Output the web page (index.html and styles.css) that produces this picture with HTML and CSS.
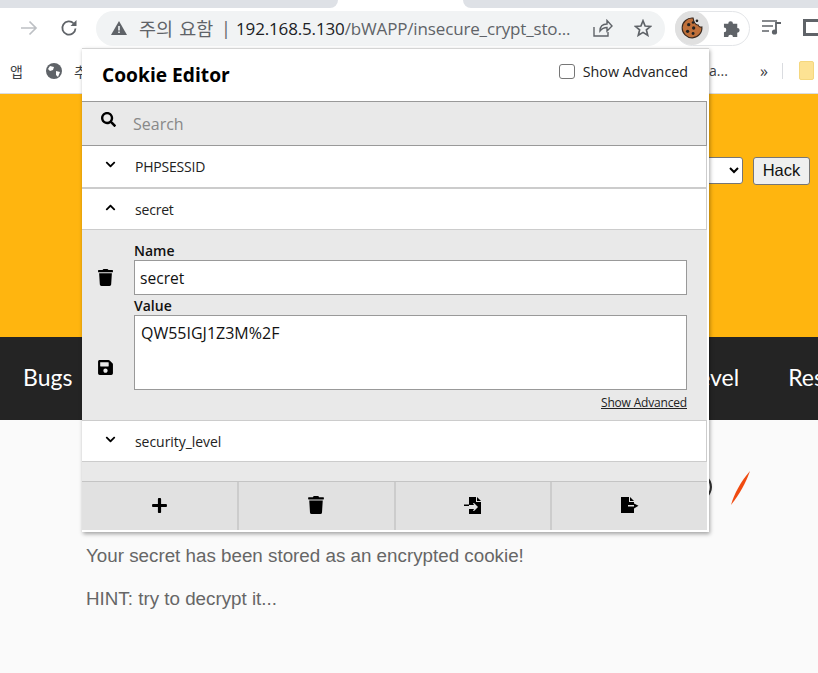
FILE: index.html
```html
<!DOCTYPE html>
<html lang="ko">
<head>
<meta charset="utf-8">
<title>Cookie Editor</title>
<link rel="stylesheet" href="styles.css">
</head>
<body>
<div class="tabstrip"><div class="tab-left"></div><div class="tab-active"></div><div class="tab-right"></div></div>
<div class="toolbar">
  <svg class="tb-arrow" viewBox="0 0 18 16"><path d="M1 8h15M9.500 1.500 16 8l-6.500 6.500" fill="none" stroke="#bdc0c4" stroke-width="1.700"/></svg>
  <svg class="tb-reload" viewBox="0 0 18 18"><path d="M15.500 9.500a6.600 6.600 0 1 1-1.800-5" fill="none" stroke="#5f6368" stroke-width="1.800"/><path d="M16.500 1v6h-6z" fill="#5f6368"/></svg>
  <div class="omnibox">
    <svg class="warn" viewBox="0 0 16 14"><path d="M8 0 16 14H0z" fill="#5f6368"/><path d="M7.200 5h1.600v4.500H7.200zM7.200 10.500h1.600V12H7.200z" fill="#f1f3f4"/></svg>
    <span class="warn-text">주의 요함</span>
    <span class="pipe">|</span>
    <span class="url"><span class="url-host">192.168.5.130</span>/bWAPP/insecure_crypt_sto...</span>
    <svg class="share" viewBox="0 0 20 18"><path d="M1 8v9h14v-4M7 12c0-5 3-7 7-7V1.500L19 7l-5 5V8.500c-3 0-5 1-7 3.500z" fill="none" stroke="#5f6368" stroke-width="1.400"/></svg>
    <svg class="star" viewBox="0 0 18 18"><path d="M9 1.800 11.100 7l5.500.4-4.200 3.500 1.300 5.400L9 13.400l-4.700 2.900 1.300-5.400L1.400 7.400 6.900 7z" fill="none" stroke="#5f6368" stroke-width="1.700"/></svg>
  </div>
  <div class="ext-pill">
    <div class="cookie-wrap">
      <svg class="cookie" viewBox="0 0 20 20"><path d="M11 1a9 9 0 1 0 8 8c-1.500.5-3-.2-3.500-1.800C13.500 7.500 11.500 5 11 1z" fill="#c0703a" stroke="#3a2a20" stroke-width="1"/><circle cx="7" cy="7" r="1.500" fill="#222"/><circle cx="11.500" cy="10" r="1.500" fill="#222"/><circle cx="6" cy="13" r="1.500" fill="#222"/><circle cx="11" cy="15" r="1.300" fill="#222"/><circle cx="14.500" cy="3.500" r="1.200" fill="#222"/><circle cx="11" cy="5" r="1.200" fill="#222"/></svg>
    </div>
    <svg class="puzzle" viewBox="0 0 20 20"><path d="M1 6h4.500a2.500 2.500 0 1 1 5 0H15v4.500a2.500 2.500 0 1 1 0 5V20h-4.500a2.500 2.500 0 1 0-5 0H1v-5a2.500 2.500 0 1 0 0-5z" fill="#5f6368"/></svg>
  </div>
  <svg class="playlist" viewBox="0 0 20 16"><path d="M0 2h15M0 7h11M0 12h7" stroke="#5f6368" stroke-width="1.700" fill="none"/><path d="M14 13V4h5" stroke="#5f6368" stroke-width="1.800" fill="none"/><circle cx="12.500" cy="13" r="2.600" fill="#5f6368"/></svg>
  <div class="sidepanel"></div>
</div>
<div class="bookmarks">
  <span class="bm-apps">앱</span>
  <svg class="globe" viewBox="0 0 16 16"><circle cx="8" cy="8" r="8" fill="#5f6368"/><path d="M4 3l4 1-1 3-3 1-2-2zM10 8l4 1-2 5-2-2z" fill="#fff"/></svg>
  <span class="bm-clip">추</span>
  <span class="bm-more">a...</span>
  <span class="bm-chev">»</span>
  <span class="bm-sep"></span>
  <span class="bm-folder"></span>
</div>
<header class="hero">
  <select class="hero-select"><option></option></select>
  <button class="hero-btn">Hack</button>
</header>
<nav class="nav">
  <span class="nav-item nav-first">Bugs</span>
  <span class="nav-item">Change Password</span>
  <span class="nav-item">Create User</span>
  <span class="nav-item">Set Security Level</span>
  <span class="nav-item">Reset</span>
</nav>
<main class="content">
  <p class="msg">Your secret has been stored as an encrypted cookie!</p>
  <p class="msg">HINT: try to decrypt it...</p>
</main>
<svg class="deco" viewBox="0 0 50 40"><path d="M2 5Q14 17 2 29" fill="none" stroke="#333" stroke-width="2"/><path d="M47 1C43 12 37 24 28 35c3-11 10-24 19-34z" fill="#f04a10"/></svg>

<section class="popup">
  <div class="pop-head">
    <h1 class="pop-title">Cookie Editor</h1>
    <label class="adv-check"><span class="checkbox"></span>Show Advanced</label>
  </div>
  <div class="search">
    <svg class="ico ico-search" viewBox="0 0 512 512"><path d="M505 442.700L405.300 343c-4.500-4.500-10.600-7-17-7H372c27.600-35.300 44-79.700 44-128C416 93.100 322.900 0 208 0S0 93.100 0 208s93.100 208 208 208c48.300 0 92.700-16.400 128-44v16.300c0 6.400 2.500 12.500 7 17l99.700 99.700c9.400 9.400 24.600 9.400 33.900 0l28.300-28.300c9.400-9.400 9.400-24.600.1-34zM208 336c-70.700 0-128-57.200-128-128 0-70.700 57.200-128 128-128 70.700 0 128 57.200 128 128 0 70.700-57.200 128-128 128z"/></svg>
    <input class="search-input" placeholder="Search">
  </div>
  <div class="row row-first">
    <svg class="ico chev" viewBox="0 0 448 512"><path d="M207.029 381.476L12.686 187.132c-9.373-9.373-9.373-24.569 0-33.941l22.667-22.667c9.357-9.357 24.522-9.375 33.901-.04L224 284.505l154.745-154.021c9.379-9.335 24.544-9.317 33.901.04l22.667 22.667c9.373 9.373 9.373 24.569 0 33.941L240.971 381.476c-9.373 9.372-24.569 9.372-33.942 0z"/></svg>
    <span class="row-name">PHPSESSID</span>
  </div>
  <div class="row row-open">
    <svg class="ico chev" viewBox="0 0 448 512"><path d="M240.971 130.524l194.343 194.343c9.373 9.373 9.373 24.569 0 33.941l-22.667 22.667c-9.357 9.357-24.522 9.375-33.901.04L224 227.495 69.255 381.516c-9.379 9.335-24.544 9.317-33.901-.04l-22.667-22.667c-9.373-9.373-9.373-24.569 0-33.941L207.030 130.525c9.372-9.373 24.568-9.373 33.941-.001z"/></svg>
    <span class="row-name">secret</span>
  </div>
  <div class="detail">
    <div class="detail-icons">
      <svg class="ico ico-trash" viewBox="0 0 448 512"><path d="M432 32H312l-9.400-18.700A24 24 0 0 0 281.100 0H166.800a23.720 23.720 0 0 0-21.400 13.300L136 32H16A16 16 0 0 0 0 48v32a16 16 0 0 0 16 16h416a16 16 0 0 0 16-16V48a16 16 0 0 0-16-16zM53.200 467a48 48 0 0 0 47.900 45h245.800a48 48 0 0 0 47.900-45L416 128H32z"/></svg>
      <svg class="ico ico-save" viewBox="0 0 448 512"><path d="M433.941 129.941l-83.882-83.882A48 48 0 0 0 316.118 32H48C21.490 32 0 53.490 0 80v352c0 26.510 21.490 48 48 48h352c26.510 0 48-21.490 48-48V163.882a48 48 0 0 0-14.059-33.941zM224 416c-35.346 0-64-28.654-64-64 0-35.346 28.654-64 64-64s64 28.654 64 64c0 35.346-28.654 64-64 64zm96-304.520V212c0 6.627-5.373 12-12 12H76c-6.627 0-12-5.373-12-12V108c0-6.627 5.373-12 12-12h228.520c3.183 0 6.235 1.264 8.485 3.515l3.480 3.480A11.996 11.996 0 0 1 320 111.480z"/></svg>
    </div>
    <div class="fields">
      <label class="field-label">Name</label>
      <input class="field-input" value="secret">
      <label class="field-label field-label-2">Value</label>
      <textarea class="field-area">QW55IGJ1Z3M%2F</textarea>
      <a class="adv-link">Show Advanced</a>
    </div>
  </div>
  <div class="row row-last">
    <svg class="ico chev" viewBox="0 0 448 512"><path d="M207.029 381.476L12.686 187.132c-9.373-9.373-9.373-24.569 0-33.941l22.667-22.667c9.357-9.357 24.522-9.375 33.901-.04L224 284.505l154.745-154.021c9.379-9.335 24.544-9.317 33.901.04l22.667 22.667c9.373 9.373 9.373 24.569 0 33.941L240.971 381.476c-9.373 9.372-24.569 9.372-33.942 0z"/></svg>
    <span class="row-name">security_level</span>
  </div>
  <div class="spacer"></div>
  <div class="actions">
    <div class="action"><svg class="ico ico-plus" viewBox="0 0 448 512"><path d="M416 208H272V64c0-17.670-14.330-32-32-32h-32c-17.670 0-32 14.330-32 32v144H32c-17.670 0-32 14.330-32 32v32c0 17.670 14.330 32 32 32h144v144c0 17.670 14.330 32 32 32h32c17.670 0 32-14.330 32-32V304h144c17.670 0 32-14.330 32-32v-32c0-17.670-14.330-32-32-32z"/></svg></div>
    <div class="action"><svg class="ico ico-trash" viewBox="0 0 448 512"><path d="M432 32H312l-9.400-18.700A24 24 0 0 0 281.100 0H166.800a23.720 23.720 0 0 0-21.400 13.300L136 32H16A16 16 0 0 0 0 48v32a16 16 0 0 0 16 16h416a16 16 0 0 0 16-16V48a16 16 0 0 0-16-16zM53.200 467a48 48 0 0 0 47.900 45h245.800a48 48 0 0 0 47.900-45L416 128H32z"/></svg></div>
    <div class="action"><svg class="ico ico-file" viewBox="0 0 18 17"><path d="M5 0h7v5h5v12H5v-5h5l-1 2 1 0 4-4-4-4h-1l1 2H5zM13 0l4 4h-4z"/><path d="M0 7.500h5v1.500H0z"/></svg></div>
    <div class="action"><svg class="ico ico-file" viewBox="0 0 18 17"><path d="M0 0h8v5h5v3H7v1.500h6V16H0zM9 0l4 4H9z"/><path d="M13 6.500 17.500 8.800 13 11.500z"/></svg></div>
  </div>
</section>
</body>
</html>
```
FILE: styles.css
```css
* { box-sizing: border-box; }
html, body { margin: 0; padding: 0; }
body {
  width: 818px;
  height: 673px;
  overflow: hidden;
  position: relative;
  background: #fafafa;
  font-family: "Open Sans", "Noto Sans CJK KR", sans-serif;
}

/* browser chrome */
.tabstrip { display: flex; height: 8px; background: #fff; }
.tab-left { width: 338px; background: #dee1e6; border-bottom-right-radius: 8px; }
.tab-active { width: 125px; }
.tab-right { flex: 1; background: #dee1e6; border-bottom-left-radius: 8px; }

.toolbar { display: flex; align-items: center; height: 40px; background: #fff; position: relative; padding-left: 20px; }
.tb-arrow { width: 18px; height: 16px; margin-right: 22px; flex: none; }
.tb-reload { width: 18px; height: 18px; margin-right: 18px; flex: none; }
.omnibox {
  display: flex; align-items: center; flex: none;
  width: 569px; height: 35px; padding-left: 15px;
  background: #f1f3f4; border-radius: 18px;
  font-family: "Open Sans", "Noto Sans CJK KR", sans-serif; font-size: 16px; color: #5f6368;
}
.warn { width: 16px; height: 14px; flex: none; margin-right: 12px; }
.warn-text { font-family: "Noto Sans CJK KR", sans-serif; font-size: 18.500px; word-spacing: 1px; width: 75px; flex: none; white-space: nowrap; }
.pipe { width: 22px; padding-left: 7px; flex: none; font-size: 18px; }
.url { width: 351px; flex: none; white-space: nowrap; font-size: 17px; letter-spacing: -0.150px; }
.url-host { color: #202124; }
.share { width: 20px; height: 18px; flex: none; margin-left: 6px; }
.star { width: 18px; height: 18px; flex: none; margin-left: 21px; }
.ext-pill {
  display: flex; align-items: center; flex: none;
  margin-left: 10px; width: 75px; height: 35px;
  border: 1px solid #e3e5e8; border-radius: 18px;
}
.cookie-wrap { width: 34px; height: 34px; margin-left: -1px; border-radius: 50%; background: #e0e0e0; display: flex; align-items: center; justify-content: center; flex: none; }
.cookie { width: 22px; height: 22px; }
.puzzle { width: 19px; height: 19px; margin-left: 14px; flex: none; margin-top: -1px; }
.playlist { width: 20px; height: 16px; margin-left: 12px; flex: none; margin-top: -2px; }
.sidepanel { width: 17px; height: 17px; border: 3px solid #5f6368; border-right-width: 0; margin-left: 21px; flex: none; margin-top: -2px; }

.bookmarks { display: flex; align-items: center; height: 46px; background: #fff; border-bottom: 1px solid #dadce0; padding-left: 10px; position: relative; font-size: 14px; color: #3c4043; }
.bm-apps { font-family: "Noto Sans CJK KR", sans-serif; width: 36px; flex: none; }
.globe { width: 16px; height: 16px; flex: none; }
.bm-clip { font-family: "Noto Sans CJK KR", sans-serif; margin-left: 12px; width: 20px; flex: none; }
.bm-more { margin-left: 615px; width: 51px; flex: none; }
.bm-chev { width: 22px; flex: none; font-size: 16px; }
.bm-sep { width: 1px; height: 16px; background: #dadce0; flex: none; }
.bm-folder { width: 15px; height: 19px; margin-left: 16px; border-radius: 2px; background: #fde293; border: 1px solid #f5d77e; flex: none; }

/* page */
.hero {
  display: flex; align-items: flex-start; justify-content: flex-end;
  height: 243px; background: #ffb50f; padding: 63px 8px 0 0;
}
.hero-select { width: 80px; height: 27px; font: 16px "Liberation Sans", sans-serif; background: #fff; border: 1px solid #767676; border-radius: 3px; }
.hero-btn { width: 57px; height: 28px; margin-left: 10px; padding: 0 0 2px; font: 16.500px "Liberation Sans", sans-serif; color: #111; background: #efefef; border: 1px solid #767676; border-radius: 3px; }
.nav { display: flex; align-items: center; gap: 49px; height: 83px; padding: 0 0 4px 23px; background: #242424; overflow: hidden; white-space: nowrap; }
.nav-item { flex: none; color: #fff; font: 23px "Lato", sans-serif; }
.nav-first { margin-right: 43px; }
.content { padding: 125px 0 0 86px; height: 253px; }
.msg { margin: 0 0 21px; font: 18.800px/22px "Liberation Sans", sans-serif; color: #666; }
.deco { position: absolute; left: 703px; top: 470px; width: 50px; height: 40px; }

/* popup */
.popup {
  position: absolute; left: 82px; top: 48px; width: 627px; height: 484px;
  padding: 0 2px 2px 0;
  display: flex; flex-direction: column;
  background: #fff; color: #000;
  border-top: 1px solid #d4d4d4;
  box-shadow: 1px 2px 4px rgba(0, 0, 0, .35);
}
.ico { display: block; fill: #000; flex: none; }
.pop-head { display: flex; align-items: center; justify-content: space-between; height: 52px; padding: 0 19px 0 20px; }
.pop-title { margin: 0; font-size: 19.200px; font-weight: 700; line-height: 52px; }
.adv-check { display: flex; align-items: center; font-size: 14.300px; color: #222; margin-top: -7px; }
.checkbox { width: 16px; height: 15px; margin-right: 8px; border: 1px solid #767676; border-radius: 3px; background: #fff; }
.search { display: flex; align-items: center; height: 45px; padding-left: 19px; background: #e9e9e9; border: 1px solid #999; border-width: 1px 1px 1px 0; }
.ico-search { width: 15px; height: 15px; margin-top: -8px; }
.search-input { margin-left: 17px; flex: 1; background: transparent; border: 0; outline: 0; padding: 0; font: 16px "Open Sans", sans-serif; }
.search-input::placeholder { color: #888; opacity: 1; }
.row { display: flex; align-items: center; height: 41px; padding-left: 23px; background: #fff; border-right: 1px solid #ccc; flex: none; }
.row-first { height: 43px; border-bottom: 2px solid #ccc; }
.row-open { height: 41px; border-bottom: 1px solid #ccc; }
.row-last { height: 42px; padding-left: 23px; border-top: 1px solid #ccc; border-bottom: 1px solid #ccc; }
.chev { width: 11px; height: 11px; margin-top: -4px; }
.row-name { margin-left: 19px; font-size: 14px; letter-spacing: -0.200px; color: #222; }
.row-last .row-name { letter-spacing: -0.050px; }
.detail { display: flex; height: 190px; background: #e9e9e9; flex: none; }
.detail-icons { position: relative; width: 52px; flex: none; }
.detail-icons .ico-trash { position: absolute; left: 16px; top: 39px; width: 15px; height: 17px; }
.detail-icons .ico-save { position: absolute; left: 16px; top: 129px; width: 15px; height: 17px; }
.fields { display: flex; flex-direction: column; width: 553px; padding-top: 12px; }
.field-label { font-size: 14px; font-weight: 600; line-height: 18px; color: #111; }
.field-label-2 { margin-top: 2px; line-height: 18px; }
.field-input { height: 35px; margin: 0; padding: 0 5px; font: 15.600px "Open Sans", sans-serif; color: #111; background: #fff; border: 1px solid #999; outline: 0; }
.field-area { height: 75px; margin: 0; padding: 5px 6px; font: 16px/24px "Open Sans", sans-serif; color: #111; background: #fff; border: 1px solid #999; outline: 0; resize: none; }
.adv-link { align-self: flex-end; margin-top: 5px; font-size: 12px; line-height: 16px; text-decoration: underline; color: #222; letter-spacing: -0.180px; }
.spacer { height: 19px; background: #e9e9e9; flex: none; }
.actions { display: flex; flex: 1; background: #e1e1e1; border-top: 1px solid #c4c4c4; }
.action { flex: 1; display: flex; align-items: center; justify-content: center; padding-bottom: 2px; border-right: 2px solid #ccc; }
.action:last-child { border-right: 0; }
.ico-plus { width: 15px; height: 17px; }
.action .ico-trash { width: 16px; height: 18px; }
.ico-file { width: 18px; height: 17px; }
```
